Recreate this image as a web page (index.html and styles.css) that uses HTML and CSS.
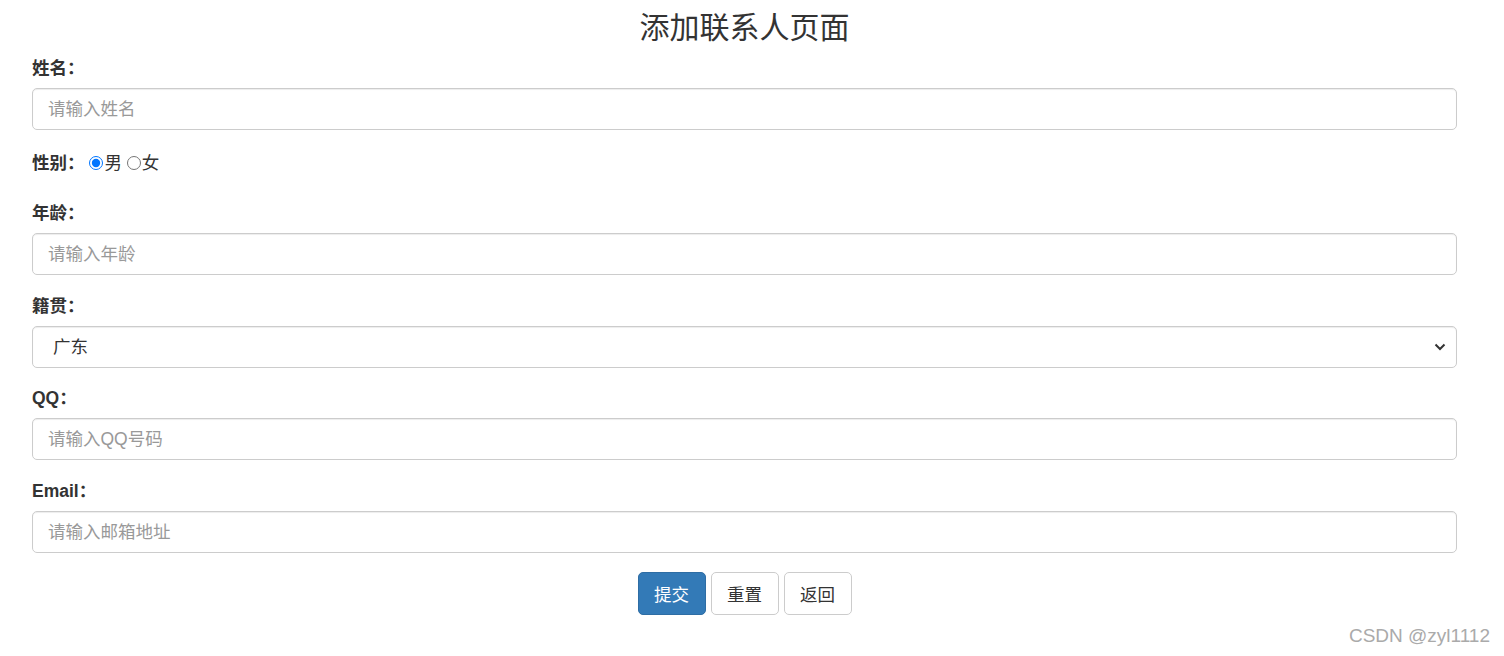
FILE: index.html
```html
<!DOCTYPE html>
<html>
<head>
    <title>添加联系人页面</title>
    <meta charset="utf-8">
    <meta name="viewport" content="width=device-width, initial-scale=1">
    <link rel="stylesheet" href="styles.css">
</head>
<body>
    <div class="container">
        <h3 class="page-title">添加联系人页面</h3>
        <form action="#" method="post">
            <div class="form-group">
                <label for="name">姓名：</label>
                <input type="text" class="form-control" id="name" name="name" placeholder="请输入姓名">
            </div>

            <div class="form-group radio-group">
                <label>性别：</label>
                <input type="radio" name="gender" value="男" checked>男
                <input type="radio" name="gender" value="女">女
            </div>

            <div class="form-group">
                <label for="age">年龄：</label>
                <input type="text" class="form-control" id="age" name="age" placeholder="请输入年龄">
            </div>

            <div class="form-group select-group">
                <label for="address">籍贯：</label>
                <div class="select-wrap">
                    <select name="address" id="address" class="form-control">
                        <option value="广东">广东</option>
                        <option value="广西">广西</option>
                        <option value="湖南">湖南</option>
                    </select>
                    <svg class="chevron" width="12" height="8" viewBox="0 0 12 8"><path d="M1.5 1.5 L6 6 L10.5 1.5" fill="none" stroke="#333" stroke-width="2"/></svg>
                </div>
            </div>

            <div class="form-group">
                <label for="qq">QQ：</label>
                <input type="text" class="form-control" id="qq" name="qq" placeholder="请输入QQ号码">
            </div>

            <div class="form-group">
                <label for="email">Email：</label>
                <input type="text" class="form-control" id="email" name="email" placeholder="请输入邮箱地址">
            </div>

            <div class="form-group buttons">
                <input class="btn btn-primary" type="submit" value="提交">
                <input class="btn btn-default" type="reset" value="重置">
                <input class="btn btn-default" type="button" value="返回">
            </div>
        </form>
    </div>
    <div class="watermark">CSDN @zyl1112</div>
</body>
</html>
```

FILE: styles.css
```css
body { margin: 0; font-family: "Liberation Sans", "Noto Sans CJK SC", sans-serif; font-size: 17.5px; line-height: 25px; color: #333; background-color: #fff; }
.container { padding: 0 47px 0 32px; }
.page-title { margin: 11px 0 12px; font-size: 30px; line-height: 33px; font-weight: 400; text-align: center; }
.form-group { margin-bottom: 19px; }
.form-group label { display: block; margin-bottom: 7px; font-weight: bold; }
.form-control { display: block; box-sizing: border-box; width: 100%; height: 42px; padding: 0 15px; font-family: inherit; font-size: 17.5px; color: #555; background-color: #fff; border: 1px solid #ccc; border-radius: 5px; box-shadow: inset 0 1px 1px rgba(0,0,0,0.075); }
.form-control::placeholder { color: #999; }
.select-group { margin-bottom: 18px; }
.select-wrap { position: relative; }
select.form-control { padding: 0 20px; color: #333; appearance: none; -webkit-appearance: none; }
.chevron { position: absolute; right: 11px; top: 17px; pointer-events: none; }
.radio-group { height: 28px; line-height: 28px; margin-bottom: 24px; }
.radio-group label { display: inline-block; margin: 0; }
.radio-group input { width: 14px; height: 14px; margin: 0 1px 0 0; vertical-align: -1px; accent-color: #0075ff; }
.buttons { display: flex; justify-content: center; gap: 5px; }
.btn { box-sizing: border-box; width: 68px; height: 43px; padding: 0; font-family: inherit; font-size: 17.5px; border: 1px solid #ccc; border-radius: 5px; cursor: pointer; }
.btn-primary { color: #fff; background-color: #337ab7; border-color: #2e6da4; }
.btn-default { color: #333; background-color: #fff; }
.watermark { position: absolute; right: 14px; top: 623px; font-size: 19px; line-height: 26px; color: #aaa; }
```
